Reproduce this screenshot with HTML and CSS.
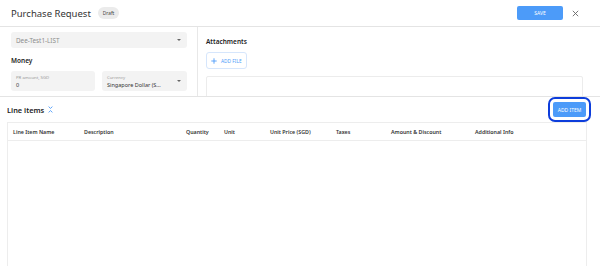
FILE: index.html
```html
<!DOCTYPE html>
<html lang="en">
<head>
    <meta charset="UTF-8">
    <meta name="viewport" content="width=device-width, initial-scale=1.0">
    <title>Purchase Request</title>
    <link rel="stylesheet" href="styles.css">
</head>
<body>
    <!-- Cabecera -->
    <div class="cabecera">
        <h1 class="titulo">Purchase Request</h1>
        <span class="etiqueta">Draft</span>
        <div class="acciones">
            <button class="boton-guardar">SAVE</button>
            <svg class="cerrar" width="7" height="7" viewBox="0 0 7 7">
                <path d="M0.8 0.8 L6.2 6.2 M6.2 0.8 L0.8 6.2" stroke="#666" stroke-width="0.9" fill="none"/>
            </svg>
        </div>
    </div>

    <!-- Datos generales -->
    <div class="seccion-superior">
        <div class="panel-izquierdo">
            <div class="selector">
                <span class="selector-texto">Dee-Test1-LIST</span>
                <span class="flecha"></span>
            </div>
            <div class="subtitulo">Money</div>
            <div class="fila-campos">
                <div class="campo">
                    <span class="campo-label">PR amount, SGD</span>
                    <span class="campo-valor">0</span>
                </div>
                <div class="campo campo-select">
                    <div>
                        <span class="campo-label">Currency</span>
                        <span class="campo-valor">Singapore Dollar (S...</span>
                    </div>
                    <span class="flecha"></span>
                </div>
            </div>
        </div>
        <div class="panel-derecho">
            <div class="subtitulo">Attachments</div>
            <button class="boton-archivo">
                <svg width="6" height="6" viewBox="0 0 6 6">
                    <path d="M3 0.3 V5.7 M0.3 3 H5.7" stroke="#4c9bf9" stroke-width="0.9"/>
                </svg>
                ADD FILE
            </button>
            <div class="caja-adjuntos"></div>
        </div>
    </div>

    <!-- Partidas -->
    <div class="seccion-partidas">
        <div class="partidas-cabecera">
            <h2 class="partidas-titulo">Line items</h2>
            <svg class="icono-orden" width="5" height="7" viewBox="0 0 5 7">
                <path d="M0.6 0.6 L2.5 2.4 L4.4 0.6 M0.6 6.4 L2.5 4.6 L4.4 6.4" stroke="#4c9bf9" stroke-width="0.9" fill="none"/>
            </svg>
            <button class="boton-agregar">ADD ITEM</button>
        </div>
        <div class="tabla">
            <div class="tabla-cabecera">
                <span>Line Item Name</span>
                <span>Description</span>
                <span>Quantity</span>
                <span>Unit</span>
                <span>Unit Price (SGD)</span>
                <span>Taxes</span>
                <span>Amount &amp; Discount</span>
                <span>Additional Info</span>
            </div>
            <div class="tabla-cuerpo"></div>
        </div>
    </div>
</body>
</html>
```

FILE: styles.css
```css
body {
    font-family: "Noto Sans", "Open Sans", sans-serif;
    margin: 0;
    height: 266px;
    overflow: hidden;
    background: white;
    color: #333;
    display: flex;
    flex-direction: column;
}

button {
    font-family: inherit;
    border: none;
    cursor: pointer;
    padding: 0;
}

/* Cabecera */
.cabecera {
    height: 26px;
    display: flex;
    align-items: center;
    padding: 0 21px 0 11px;
    border-bottom: 1px solid #e4e4e4;
    flex-shrink: 0;
}

.titulo {
    font-size: 9.5px;
    font-weight: 400;
    margin: 0;
    color: #333;
}

.etiqueta {
    margin-left: 7px;
    font-size: 4.8px;
    background: #ebebeb;
    color: #444;
    padding: 3px 5px;
    border-radius: 7px;
}

.acciones {
    margin-left: auto;
    display: flex;
    align-items: center;
}

.boton-guardar {
    width: 46px;
    height: 14px;
    background: #4c9bf9;
    color: white;
    font-size: 5px;
    border-radius: 2px;
}

.cerrar {
    margin-left: 9px;
}

/* Datos generales */
.seccion-superior {
    height: 69px;
    display: flex;
    border-bottom: 1px solid #e4e4e4;
    flex-shrink: 0;
    overflow: hidden;
}

.panel-izquierdo {
    width: 176px;
    padding: 5px 10px 0 11px;
    border-right: 1px solid #e8e8e8;
}

.selector {
    height: 16px;
    background: #f3f3f3;
    border-radius: 3px;
    display: flex;
    align-items: center;
    justify-content: space-between;
    padding: 0 6px 0 5px;
}

.selector-texto {
    font-size: 6.3px;
    color: #8d8d8d;
}

.flecha {
    width: 0;
    height: 0;
    border-left: 2px solid transparent;
    border-right: 2px solid transparent;
    border-top: 2px solid #666;
}

.subtitulo {
    font-size: 6.5px;
    font-weight: 600;
    color: #222;
}

.panel-izquierdo .subtitulo {
    margin: 8px 0 6px;
}

.fila-campos {
    display: flex;
    gap: 7px;
}

.campo {
    flex: 1;
    height: 20px;
    background: #f3f3f3;
    border-radius: 3px;
    padding: 0 5px;
    display: flex;
    flex-direction: column;
    justify-content: center;
}

.campo-select {
    flex-direction: row;
    align-items: center;
    justify-content: space-between;
    padding-right: 6px;
}

.campo-label {
    display: block;
    font-size: 4.3px;
    color: #999;
    line-height: 7px;
}

.campo-valor {
    display: block;
    font-size: 5.5px;
    color: #333;
    line-height: 8px;
}

.panel-derecho {
    flex: 1;
    padding: 10px 17px 0 8px;
}

.boton-archivo {
    margin-top: 6px;
    height: 17px;
    width: 41px;
    background: white;
    border: 1px solid #d6e6fc;
    border-radius: 3px;
    color: #4c9bf9;
    font-size: 4.8px;
    display: flex;
    align-items: center;
    gap: 4px;
    padding-left: 4px;
}

.caja-adjuntos {
    margin-top: 7px;
    height: 40px;
    border: 1px solid #ececec;
    border-radius: 2px;
}

/* Partidas */
.seccion-partidas {
    flex: 1;
    display: flex;
    flex-direction: column;
    padding: 0 13px 0 7px;
    min-height: 0;
}

.partidas-cabecera {
    height: 25px;
    display: flex;
    align-items: center;
    flex-shrink: 0;
}

.partidas-titulo {
    font-size: 7.4px;
    font-weight: 600;
    margin: 0;
    color: #222;
}

.icono-orden {
    margin-left: 4px;
}

.boton-agregar {
    margin-left: auto;
    margin-right: 1px;
    width: 33px;
    height: 15px;
    background: #4c9bf9;
    color: white;
    font-size: 5px;
    border-radius: 2px;
    outline: 2px solid #0d3ddb;
    outline-offset: 3px;
}

.tabla {
    flex: 1;
    display: flex;
    flex-direction: column;
    border: 1px solid #ededed;
    border-bottom: none;
}

.tabla-cabecera {
    height: 17px;
    display: grid;
    grid-template-columns: 71px 102px 38px 46px 66px 55px 84px 1fr;
    align-items: center;
    padding-left: 5px;
    border-bottom: 1px solid #ededed;
    font-size: 5.3px;
    font-weight: 600;
    color: #333;
}

.tabla-cuerpo {
    flex: 1;
}
```
